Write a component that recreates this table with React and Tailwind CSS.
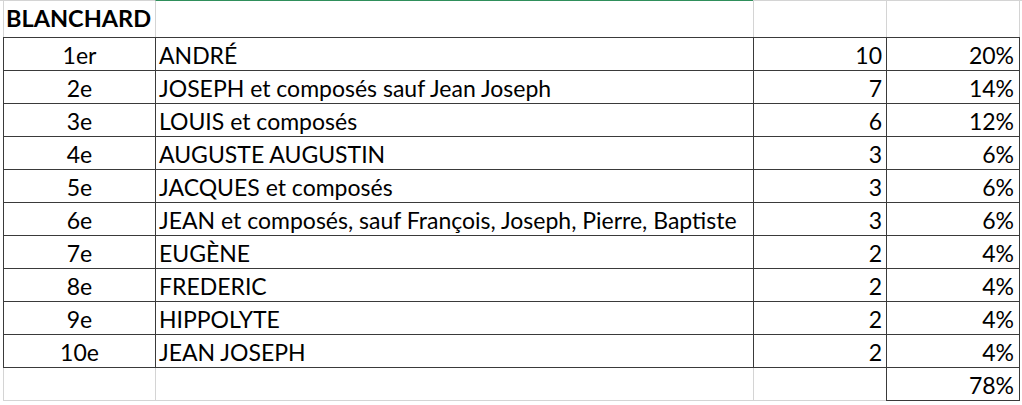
import React from "react";

const rows = [
  ["1er", "ANDRÉ", "10", "20%"],
  ["2e", "JOSEPH et composés sauf Jean Joseph", "7", "14%"],
  ["3e", "LOUIS et composés", "6", "12%"],
  ["4e", "AUGUSTE AUGUSTIN", "3", "6%"],
  ["5e", "JACQUES et composés", "3", "6%"],
  ["6e", "JEAN et composés, sauf François, Joseph, Pierre, Baptiste", "3", "6%"],
  ["7e", "EUGÈNE", "2", "4%"],
  ["8e", "FREDERIC", "2", "4%"],
  ["9e", "HIPPOLYTE", "2", "4%"],
  ["10e", "JEAN JOSEPH", "2", "4%"],
];

export default function App() {
  return (
    <div className="w-[1022px] h-[405px] bg-white overflow-hidden text-black font-['Lato',sans-serif] text-[23px] leading-none">
      {/* header row */}
      <div className="flex h-[37px]">
        <div className="w-[3px] border-t border-[#d4d4d4]" />
        <div className="w-[152px] border-t border-l border-[#d4d4d4] flex items-end pb-[7px] pl-[2px] font-bold text-[23.5px] whitespace-nowrap">
          BLANCHARD
        </div>
        <div className="w-[598px] border-t border-t-[#2f8f5b] border-l border-l-[#d4d4d4]" />
        <div className="w-[133px] border-t border-l border-[#d4d4d4]" />
        <div className="w-[134px] border-t border-l border-r border-[#d4d4d4]" />
        <div className="w-[2px] border-t border-[#d4d4d4]" />
      </div>
      {/* table */}
      <div className="ml-[3px] w-[1017px] border-t border-[#3a3a3a]">
        {rows.map((r, i) => (
          <div key={i} className="flex h-[33px] border-b border-[#3a3a3a]">
            <div className="w-[152px] border-l border-[#3a3a3a] flex items-end justify-center pb-[3px]">
              {r[0]}
            </div>
            <div className="w-[598px] border-l border-[#3a3a3a] flex items-end pl-[3px] pb-[3px] whitespace-nowrap">
              {r[1]}
            </div>
            <div className="w-[133px] border-l border-[#3a3a3a] flex items-end justify-end pr-[4px] pb-[3px]">
              {r[2]}
            </div>
            <div className="w-[134px] border-l border-r border-[#3a3a3a] flex items-end justify-end pr-[5px] pb-[3px]">
              {r[3]}
            </div>
          </div>
        ))}
        {/* total row */}
        <div className="flex h-[33px]">
          <div className="w-[152px] border-l border-b border-[#d4d4d4]" />
          <div className="w-[598px] border-l border-b border-[#d4d4d4]" />
          <div className="w-[133px] border-l border-b border-[#d4d4d4]" />
          <div className="w-[134px] border-l border-r border-b border-[#3a3a3a] flex items-end justify-end pr-[5px] pb-[3px]">
            78%
          </div>
        </div>
      </div>
    </div>
  );
}
